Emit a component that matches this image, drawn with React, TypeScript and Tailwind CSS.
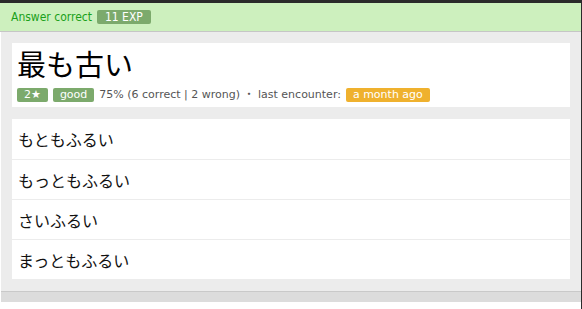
export default function App() {
  const answers = ["もともふるい", "もっともふるい", "さいふるい", "まっともふるい"];
  return (
    <div className="w-[582px] h-[309px] bg-[#2b2b2b] flex flex-col overflow-hidden" style={{ fontFamily: '"DejaVu Sans", "Noto Sans CJK JP", sans-serif' }}>
      <div className="h-[3px] shrink-0" />
      <div className="mr-[1px] flex flex-col bg-white flex-1">
        <div className="h-[29px] shrink-0 bg-[#cdf0be] border-b border-[#c6c6c6] flex items-center pl-[11px] gap-[5px]" style={{ fontFamily: '"DejaVu Sans Condensed", "Liberation Sans", sans-serif' }}>
          <span className="text-[12px] text-[#1aa01a]">Answer correct</span>
          <span className="bg-[#7caa6c] text-white text-[12px] leading-[14px] rounded-[2px] px-[8px]">11 EXP</span>
        </div>
        <div className="bg-[#ececec] ml-[1px] px-[11px] pt-[11px] pb-[12px] flex flex-col gap-[12px] border-b border-[#c9c9c9]">
          <div className="bg-white h-[64px] px-[5px] pt-[2px]">
            <div className="text-[29px] leading-[36px] text-black" style={{ fontFamily: '"Noto Sans CJK JP", sans-serif' }}>最も古い</div>
            <div className="flex items-center gap-[5px] mt-[6px] text-[11px] text-[#555]">
              <span className="bg-[#7caa6c] text-white leading-[14px] rounded-[2px] px-[7px]">2★</span>
              <span className="bg-[#7caa6c] text-white leading-[14px] rounded-[2px] px-[7px]">good</span>
              <span>75% (6 correct | 2 wrong) ・ last encounter:</span>
              <span className="bg-[#efb12e] text-white leading-[14px] rounded-[2px] px-[7px]">a month ago</span>
            </div>
          </div>
          <div className="bg-white flex flex-col">
            {answers.map((a, i) => (
              <div key={a} className={"h-[40px] flex items-center px-[6px] text-[16px] text-[#111] " + (i > 0 ? "border-t border-[#ececec]" : "")} style={{ fontFamily: '"Noto Sans CJK JP", sans-serif' }}>
                {a}
              </div>
            ))}
          </div>
        </div>
        <div className="h-[10px] bg-[#dcdcdc] ml-[1px]" />
        <div className="flex-1 bg-white" />
      </div>
    </div>
  );
}
